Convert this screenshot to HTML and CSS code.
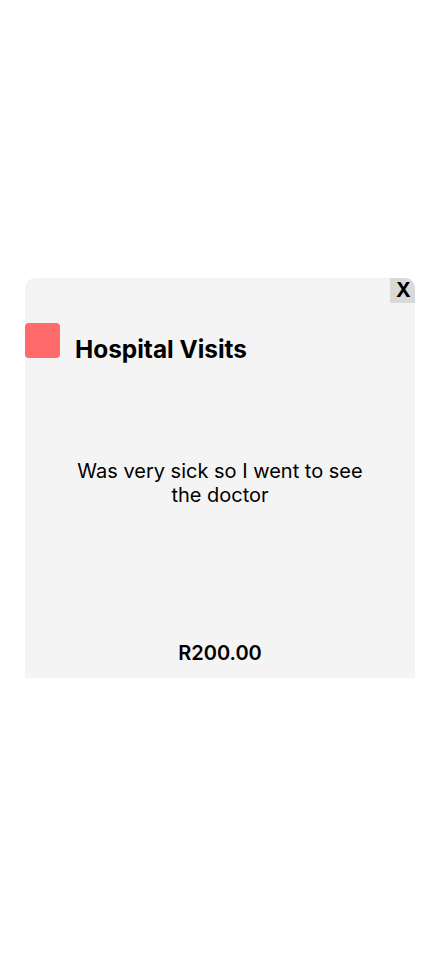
FILE: index.html
```html
<!DOCTYPE html>
<html>
<head>
<meta charset="utf-8">
<link rel="stylesheet" href="styles.css">
</head>
<body>
<div class="page">
  <div class="card">
    <button class="close">X</button>
    <div class="header">
      <div class="swatch"></div>
      <h2 class="title">Hospital Visits</h2>
    </div>
    <p class="desc">Was very sick so I went to see the doctor</p>
    <p class="amount">R200.00</p>
  </div>
</div>
</body>
</html>
```
FILE: styles.css
```css
* { box-sizing: border-box; }
html, body { margin: 0; padding: 0; background: #fff; }
body { font-family: Inter, "Noto Sans", sans-serif; color: #000; }
.page { padding: 278px 25px 0; }
.card {
  position: relative;
  width: 390px;
  height: 400px;
  background: #f4f4f4;
  border-radius: 10px 10px 0 0;
  overflow: hidden;
  display: flex;
  flex-direction: column;
}
.close {
  position: absolute;
  top: 0;
  right: 0;
  width: 25px;
  height: 25px;
  border: none;
  padding: 0 0 0 2px;
  background: #d9d9d9;
  font-family: Inter, sans-serif;
  font-weight: 700;
  font-size: 20px;
  line-height: 25px;
  color: #000;
}
.header {
  display: flex;
  align-items: flex-end;
  gap: 15px;
  margin-top: 45px;
}
.swatch {
  width: 35px;
  height: 35px;
  flex: none;
  background: #ff6b6b;
  border-radius: 4px;
}
.title {
  margin: 0 0 -5px;
  font-size: 24.4px;
  font-weight: 700;
  line-height: 28px;
}
.desc {
  margin: 101px 45px 0;
  text-align: center;
  font-size: 20px;
  line-height: 24px;
}
.amount {
  margin: auto 0 13px;
  text-align: center;
  font-size: 20px;
  font-weight: 600;
  line-height: 24px;
}
```
